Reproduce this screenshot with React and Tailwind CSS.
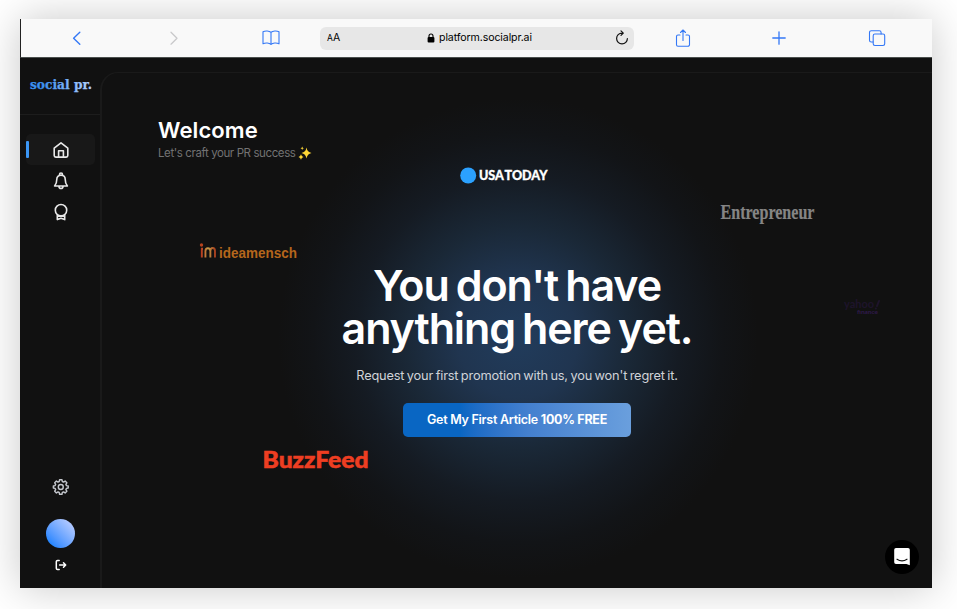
import React from 'react';

function Toolbar() {
  const line = { fill: 'none', stroke: '#3478f6', strokeWidth: 1.25, strokeLinecap: 'round', strokeLinejoin: 'round' };
  return (
    <header className="flex h-[39px] shrink-0 items-center border-b border-l border-b-[#4b504e] border-l-[#222] bg-[#f9f9f9]">
      <div className="flex w-[299px] items-center pl-[48px]">
        <svg width="16" height="16" viewBox="0 0 16 16" {...line} strokeWidth="1.4"><path d="M10.8 2.2 4.6 8.2l6.2 6" /></svg>
        <svg className="ml-[81px]" width="16" height="16" viewBox="0 0 16 16" {...line} stroke="#c9c9cb"><path d="m5 2.2 6 6-6 6" /></svg>
        <svg className="ml-[79px]" width="20" height="18" viewBox="0 0 20 18" {...line} strokeWidth="1.1">
          <path d="M10 3.4C8.300 1.700 4.200 1.500 2 2.800v12c2.400-1.300 6.200-1.100 8 .6 1.800-1.700 5.600-1.900 8-.6v-12C15.800 1.500 11.700 1.700 10 3.400Zm0 0v12" />
        </svg>
      </div>
      <div className="flex h-[23px] w-[314px] items-center rounded-[6px] bg-[#e7e7e7] px-[7px] font-[Inter,sans-serif] text-black">
        <div className="flex w-[100px] items-baseline"><span className="text-[8.5px]">A</span><span className="text-[10.5px]">A</span></div>
        <svg width="8" height="10" viewBox="0 0 8 10"><rect x="0.600" y="4" width="6.800" height="5.600" rx="1" fill="#000" /><path d="M2 4.500V3a2 2 0 0 1 4 0v1.500" fill="none" stroke="#000" strokeWidth="1.100" /></svg>
        <span className="ml-[4px] text-[10.6px] tracking-[-0.11px]">platform.socialpr.ai</span>
        <svg className="ml-auto -mr-[3px]" width="16" height="16" viewBox="0 0 16 16" fill="none" stroke="#111" strokeWidth="1.200" strokeLinecap="round" strokeLinejoin="round">
          <path d="M13.400 8.500a5.400 5.400 0 1 1-5.400-5.400h1.200M7 .900l2.300 2.200L7 5.400" />
        </svg>
      </div>
      <div className="flex items-center pl-[40px]">
        <svg width="18" height="20" viewBox="0 0 18 20" {...line} strokeWidth="1.100"><path d="M6 7H4a1.500 1.500 0 0 0-1.500 1.500v8.200A1.500 1.500 0 0 0 4 18.200h10a1.500 1.500 0 0 0 1.500-1.500V8.500A1.500 1.500 0 0 0 14 7h-2M9 12.500V2.200M6.500 4.500 9 2l2.500 2.500" /></svg>
        <svg className="ml-[79px]" width="16" height="16" viewBox="0 0 16 16" {...line} strokeWidth="1.300"><path d="M8 1.800v12.400M1.800 8h12.400" /></svg>
        <svg className="ml-[80px]" width="20" height="18" viewBox="0 0 20 18" {...line} strokeWidth="1.100"><rect x="6.200" y="5" width="11.500" height="11.500" rx="1.700" /><path d="M6 13H4.300a1.800 1.800 0 0 1-1.800-1.800V3.500a1.800 1.800 0 0 1 1.800-1.800h8a1.800 1.800 0 0 1 1.800 1.800V5" /></svg>
      </div>
    </header>
  );
}

function NavIcon({ children }) {
  return (
    <svg width="18" height="18" viewBox="0 0 18 18" fill="none" stroke="#e9e9e9" strokeWidth="1.600" strokeLinecap="round" strokeLinejoin="round">
      {children}
    </svg>
  );
}

function Sidebar() {
  return (
    <aside className="flex w-[80px] shrink-0 flex-col items-center">
      <div className="flex h-[57px] w-full items-center justify-center border-b border-[#1d1d1d]">
        <svg width="64" height="22" viewBox="0 0 64 22" className="ml-[1px]">
          <defs><linearGradient id="brand"><stop offset="0.200" stopColor="#3a8ff0" /><stop offset="1" stopColor="#b7d2ff" /></linearGradient></defs>
          <text x="1" y="14.300" textLength="62" lengthAdjust="spacingAndGlyphs" fontFamily="DejaVu Serif, serif" fontWeight="700" fontSize="12.500" fill="url(#brand)" stroke="url(#brand)" strokeWidth="0.250">social pr.</text>
        </svg>
      </div>
      <nav className="mt-[19px] flex w-full flex-col items-center">
        <div className="ml-[1px] flex h-[31px] w-[69px] items-center rounded-[5px] bg-[#181818]">
          <span className="h-[17px] w-[3px] rounded-[1px] bg-[#3b96f5]" />
          <span className="ml-[23px]"><NavIcon><path d="M2.200 7.200 9 1.800l6.800 5.400v7.300a1.600 1.600 0 0 1-1.600 1.600H3.800a1.600 1.600 0 0 1-1.600-1.600ZM6.600 16V9.800h4.800V16" /></NavIcon></span>
        </div>
        <div className="flex h-[31px] items-center pl-[1px]">
          <NavIcon><path d="M2.600 14c1.300-1.500 2.200-4.200 2.200-6.800C4.800 4.700 6.400 3.300 9 3.300s4.200 1.400 4.200 3.900c0 2.600.9 5.300 2.200 6.800ZM7.500 3.200V2.500a1.500 1.500 0 0 1 3 0v.700M7 14.400a2 2 0 0 0 4 0" /></NavIcon>
        </div>
        <div className="flex h-[31px] items-center pl-[1px]">
          <NavIcon><circle cx="9" cy="7.200" r="5.700" /><path d="M5.300 12v4.600L9 15.200l3.700 1.400V12M5.300 13.200h7.400" /></NavIcon>
        </div>
      </nav>
      <div className="mt-auto flex flex-col items-center pb-[17px] pl-[1px]">
        <svg width="18" height="18" viewBox="0 0 24 24" fill="none" stroke="#c4c7cd" strokeWidth="1.900" strokeLinejoin="round">
          <path d="m10.100 2.300-.5 2.400-1.600.700-2.100-1.300-2.300 2.300 1.300 2.100-.7 1.600-2.400.500v2.800l2.400.5.700 1.600-1.300 2.100 2.300 2.300L8 18.600l1.600.7.500 2.400h3.200l.5-2.400 1.600-.7 2.100 1.300 2.300-2.300-1.300-2.100.7-1.600 2.400-.5v-2.800l-2.400-.5-.7-1.600 1.300-2.100-2.300-2.300-2.100 1.300-1.600-.7-.5-2.400Z" />
          <circle cx="11.700" cy="12" r="3.300" />
        </svg>
        <div className="mt-[23px] size-[29px] rounded-full bg-linear-to-tr from-[#0a80ff] from-[10%] to-[#c9d4ff]" />
        <svg className="mt-[11px]" width="12" height="12" viewBox="0 0 12 12" fill="none" stroke="#fff" strokeWidth="1.500" strokeLinecap="round" strokeLinejoin="round"><path d="M4.200 1.500H2.500a1.200 1.200 0 0 0-1.200 1.200v6.600a1.200 1.200 0 0 0 1.200 1.200h1.700M4.600 6h6M8.500 3.800 10.700 6 8.500 8.200" /></svg>
      </div>
    </aside>
  );
}

function PressLogos() {
  return (
    <>
      <svg className="absolute left-[358px] top-[94px]" width="90" height="18" viewBox="0 0 90 18">
        <circle cx="8.200" cy="8.500" r="8" fill="#2ba1ff" />
        <text x="19" y="12.800" textLength="68.500" lengthAdjust="spacingAndGlyphs" wordSpacing="-1.500" fontFamily="Lato, sans-serif" fontWeight="900" fontSize="12.300" fill="#fff" stroke="#fff" strokeWidth="0.300">USA TODAY</text>
      </svg>
      <svg className="absolute left-[617px] top-[128px] overflow-visible" width="120" height="26" viewBox="0 0 120 26">
        <text x="1.500" y="17.500" textLength="94" lengthAdjust="spacingAndGlyphs" fontFamily="Liberation Serif, serif" fontWeight="700" fontSize="21" fill="#858585" stroke="#858585" strokeWidth="0.200">Entrepreneur</text>
      </svg>
      <svg className="absolute left-[97px] top-[167px]" width="102" height="24" viewBox="0 0 102 24">
        <defs><linearGradient id="mark"><stop offset="0" stopColor="#b9361d" /><stop offset="0.500" stopColor="#c5a04a" /><stop offset="1" stopColor="#a63e1d" /></linearGradient></defs>
        <circle cx="2.500" cy="5" r="1.700" fill="#b5431e" />
        <path d="M2.800 8.300v9.200M6.400 17.500v-6.200q0-3 2.500-3t2.500 3v6.200M11.400 11q0-3 2.300-3t2.300 3v6.500M2 8.800h2" fill="none" stroke="url(#mark)" strokeWidth="1.900" />
        <text x="20" y="17.500" textLength="78" lengthAdjust="spacingAndGlyphs" fontFamily="Liberation Sans, sans-serif" fontWeight="700" fontSize="14.300" fill="#b5661c">ideamensch</text>
      </svg>
      <svg className="absolute left-[741px] top-[226px]" width="40" height="20" viewBox="0 0 40 20">
        <text x="1" y="9" textLength="30" lengthAdjust="spacingAndGlyphs" fontFamily="Lato, sans-serif" fontWeight="700" fontSize="10.500" fill="#1e142b">yahoo</text>
        <path d="m34 7 2-5M32.800 9.500h.1" stroke="#1e142b" strokeWidth="2" strokeLinecap="round" />
        <text x="14" y="15" textLength="21" lengthAdjust="spacingAndGlyphs" fontFamily="Lato, sans-serif" fontWeight="900" fontSize="6" fill="#2d1947">finance</text>
      </svg>
      <svg className="absolute left-[160px] top-[374px]" width="110" height="28" viewBox="0 0 110 28">
        <text x="0.500" y="20.800" textLength="106" lengthAdjust="spacingAndGlyphs" fontFamily="Lato, sans-serif" fontWeight="900" fontSize="22.500" fill="#ee3e22" stroke="#ee3e22" strokeWidth="0.500">BuzzFeed</text>
      </svg>
    </>
  );
}

function Sparkles() {
  return (
    <svg width="14" height="14" viewBox="0 0 14 14" fill="#fcd535" className="mb-[1px] ml-[3px]">
      <path d="M8.500 1.500q.8 4.500 5 5.500-4.200.8-5 5.500-.8-4.700-5-5.500 4.200-.8 5-5.500ZM3 8.300q.4 2.200 2.500 2.700Q3.400 11.500 3 13.700 2.500 11.500.500 11 2.500 10.500 3 8.300ZM4.200.500q.2 1.500 1.700 1.800-1.500.3-1.700 1.700-.3-1.400-1.700-1.700Q4 2 4.200.500Z" />
    </svg>
  );
}

export default function App() {
  return (
    <div className="h-[609px] w-[957px] overflow-hidden bg-white pl-[20px] pt-[19px]">
      <div className="flex h-[569px] w-[912px] flex-col bg-[#111111] shadow-[0_0_40px_rgba(0,0,0,0.22)]">
        <Toolbar />
        <div className="flex min-h-0 flex-1">
          <Sidebar />
          <main className="relative mt-[14px] flex min-w-0 flex-1 flex-col overflow-hidden rounded-tl-[18px] border-l-2 border-t border-[#1a1a1a] bg-[radial-gradient(circle_at_416px_265px,#213c5c_0px,#203550_60px,#1a2837_112px,#151b23_162px,#121417_205px,#111111_240px)] font-[Inter,sans-serif] text-white">
            <div className="pl-[56px] pt-[44px]">
              <h1 className="text-[22px] font-semibold leading-[26px] tracking-[0.1px]">Welcome</h1>
              <p className="mt-[3px] flex items-center text-[11.5px] leading-[15px] tracking-[-0.4px] text-[#737373]">Let's craft your PR success<Sparkles /></p>
            </div>
            <section className="mt-[103px] flex flex-col items-center text-center">
              <h2 className="text-[43px] font-semibold leading-[43px] tracking-[-1.130px] [word-spacing:-2.500px]"><span className="block">You don't have</span><span className="block">anything here yet.</span></h2>
              <p className="mt-[17px] text-[12.800px] leading-[18px] tracking-[-0.180px] text-[#d0d3d8] [word-spacing:-0.900px]">Request your first promotion with us, you won't regret it.</p>
              <button className="mt-[18px] h-[34px] w-[228px] rounded-[5px] bg-linear-to-r from-[#0966c3] from-[25%] via-[#4480cf] via-[55%] to-[#6a9fdd] text-[12.500px] font-semibold tracking-[-0.270px]">Get My First Article <span className="font-bold">100% FREE</span></button>
            </section>
            <PressLogos />
            <div className="absolute left-[783px] top-[467px] flex size-[34px] items-center justify-center rounded-full bg-black">
              <svg className="mb-[1px]" width="18" height="19" viewBox="0 0 18 19"><path d="M3 1h12a1.800 1.800 0 0 1 1.800 1.800V18.300L13.500 17H3a1.800 1.800 0 0 1-1.800-1.800V2.800A1.800 1.800 0 0 1 3 1Z" fill="#fff" /><path d="M4 12.200q5 3.400 10 0" fill="none" stroke="#111" strokeWidth="1.100" strokeLinecap="round" /></svg>
            </div>
          </main>
        </div>
      </div>
    </div>
  );
}
